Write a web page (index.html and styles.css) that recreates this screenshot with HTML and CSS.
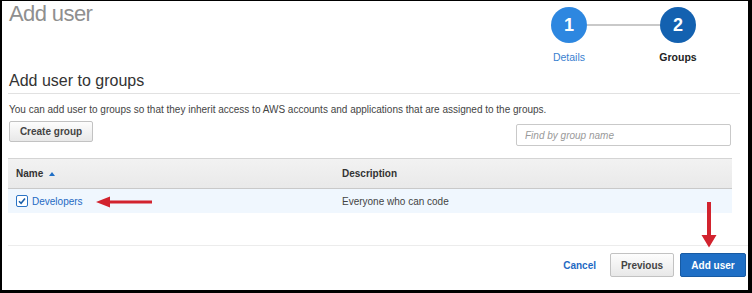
FILE: index.html
```html
<!DOCTYPE html>
<html>
<head>
<meta charset="utf-8">
<link rel="stylesheet" href="styles.css">
</head>
<body>
<div class="frame">
  <div class="header">
    <h1 class="title">Add user</h1>
    <div class="stepper">
      <div class="step">
        <div class="circle c1">1</div>
        <div class="step-label done">Details</div>
      </div>
      <div class="connector"></div>
      <div class="step">
        <div class="circle c2">2</div>
        <div class="step-label current">Groups</div>
      </div>
    </div>
  </div>
  <h2 class="section-title">Add user to groups</h2>
  <p class="desc">You can add user to groups so that they inherit access to AWS accounts and applications that are assigned to the groups.</p>
  <div class="toolbar">
    <button class="btn">Create group</button>
    <input class="search" type="text" placeholder="Find by group name">
  </div>
  <div class="table">
    <div class="thead">
      <div class="col-name">Name <span class="sort"></span></div>
      <div class="col-desc">Description</div>
    </div>
    <div class="trow">
      <div class="col-name">
        <span class="check"><svg width="8" height="8" viewBox="0 0 8 8"><path d="M1 4.2 L3.1 6.3 L7 1.6" fill="none" stroke="#1b5fa8" stroke-width="1.6"/></svg></span>
        <a class="link">Developers</a>
      </div>
      <div class="col-desc">Everyone who can code</div>
    </div>
  </div>
  <div class="footer">
    <a class="cancel">Cancel</a>
    <button class="btn">Previous</button>
    <button class="btn primary">Add user</button>
  </div>
  <svg class="arrow-left" width="57" height="12" viewBox="0 0 57 12"><polygon points="0,6 14,0.5 14,4.5 56,4.5 56,7.5 14,7.5 14,11.5" fill="#d2232e"/></svg>
  <svg class="arrow-down" width="16" height="46" viewBox="0 0 16 46"><polygon points="6,0 10,0 10,33 15.5,33 8,45.5 0.5,33 6,33" fill="#d2232e"/></svg>
</div>
</body>
</html>
```
FILE: styles.css
```css
* { box-sizing: border-box; }
html, body { margin: 0; padding: 0; background: #fff; }
body { font-family: "Liberation Sans", Arial, sans-serif; font-size: 10px; color: #444; }
.frame {
  position: relative;
  width: 752px;
  height: 293px;
  border-style: solid;
  border-color: #000;
  border-width: 1px 4px 3px 2px;
  padding-left: 6px;
  overflow: hidden;
}
.header { display: flex; justify-content: space-between; align-items: flex-start; height: 63px; }
.title { margin: 0 0 0 1px; font-weight: normal; font-size: 22px; letter-spacing: -0.6px; line-height: 26px; color: #8f8f8f; }
.stepper { display: flex; align-items: flex-start; margin-top: 6px; margin-right: 52px; }
.step { width: 36px; display: flex; flex-direction: column; align-items: center; }
.circle {
  width: 36px; height: 36px; border-radius: 50%;
  color: #fff; font-weight: bold; font-size: 18px; line-height: 36px; text-align: center;
}
.c1 { background: #2d87e0; }
.c2 { background: #1361b0; }
.step-label { margin-top: 8px; line-height: 13px; white-space: nowrap; font-size: 10.5px; }
.done { color: #3a7fd0; }
.current { color: #222; font-weight: bold; }
.connector { width: 73px; height: 2px; background: #c9c9c9; margin-top: 17px; }
.section-title {
  margin: 7px 8px 0 0; font-weight: normal; font-size: 16px; line-height: 19px; color: #333;
  padding: 0 0 3px 1px; border-bottom: 1px solid #e1e1e1;
}
.desc { margin: 9px 0 0 1px; line-height: 13px; color: #444; }
.toolbar { display: flex; justify-content: space-between; align-items: flex-start; margin: 5px 17px 0 1px; }
.btn {
  font-family: inherit; font-size: 10px; font-weight: bold; color: #444; white-space: nowrap;
  height: 22px; padding: 0 10px; border: 1px solid #c2c2c2; border-radius: 2px;
  background: linear-gradient(#fdfdfd, #e8e8e8);
}
.toolbar .btn { width: 84px; height: 21px; padding: 0; }
.search {
  width: 215px; height: 22px; margin-top: 3px; border: 1px solid #c9c9c9; border-radius: 2px;
  font-family: inherit; font-size: 10px; padding: 0 8px;
}
.search::placeholder { color: #999; font-style: italic; }
.table { margin: 12px 16px 0 0; }
.thead {
  display: flex; height: 31px; align-items: center;
  background: linear-gradient(#f2f2f2, #e9e9e9);
  border-top: 1px solid #d4d4d4; border-bottom: 1px solid #c9c9c9;
  font-weight: bold; color: #333;
}
.trow { display: flex; height: 24px; align-items: center; background: #f0f7fe; }
.col-name { width: 325px; padding-left: 8px; display: flex; align-items: center; }
.col-desc { padding-left: 9px; }
.sort {
  width: 0; height: 0; margin-left: 6px;
  border-left: 3.5px solid transparent; border-right: 3.5px solid transparent; border-bottom: 4px solid #1f6fc6;
}
.check {
  width: 12px; height: 12px; border: 1px solid #2a74c6; border-radius: 2px; background: #fff;
  display: flex; align-items: center; justify-content: center; margin-right: 4px;
}
.check svg { display: block; }
.link { color: #1f6ac3; }
.footer {
  margin-top: 32px; border-top: 1px solid #ececec; padding-top: 7px;
  display: flex; justify-content: flex-end; align-items: center; gap: 6px; padding-right: 2px;
}
.cancel { color: #1f6ac3; font-weight: bold; margin-right: 8px; }
.footer .btn { height: 24px; }
.footer .btn.primary { width: 66px; padding: 0; background: #1f6fc6; border-color: #175aa3; color: #fff; }
.footer .btn:not(.primary) { width: 64px; padding: 0; }
.arrow-left { position: absolute; left: 94px; top: 195px; }
.arrow-down { position: absolute; left: 699px; top: 201px; }
```
